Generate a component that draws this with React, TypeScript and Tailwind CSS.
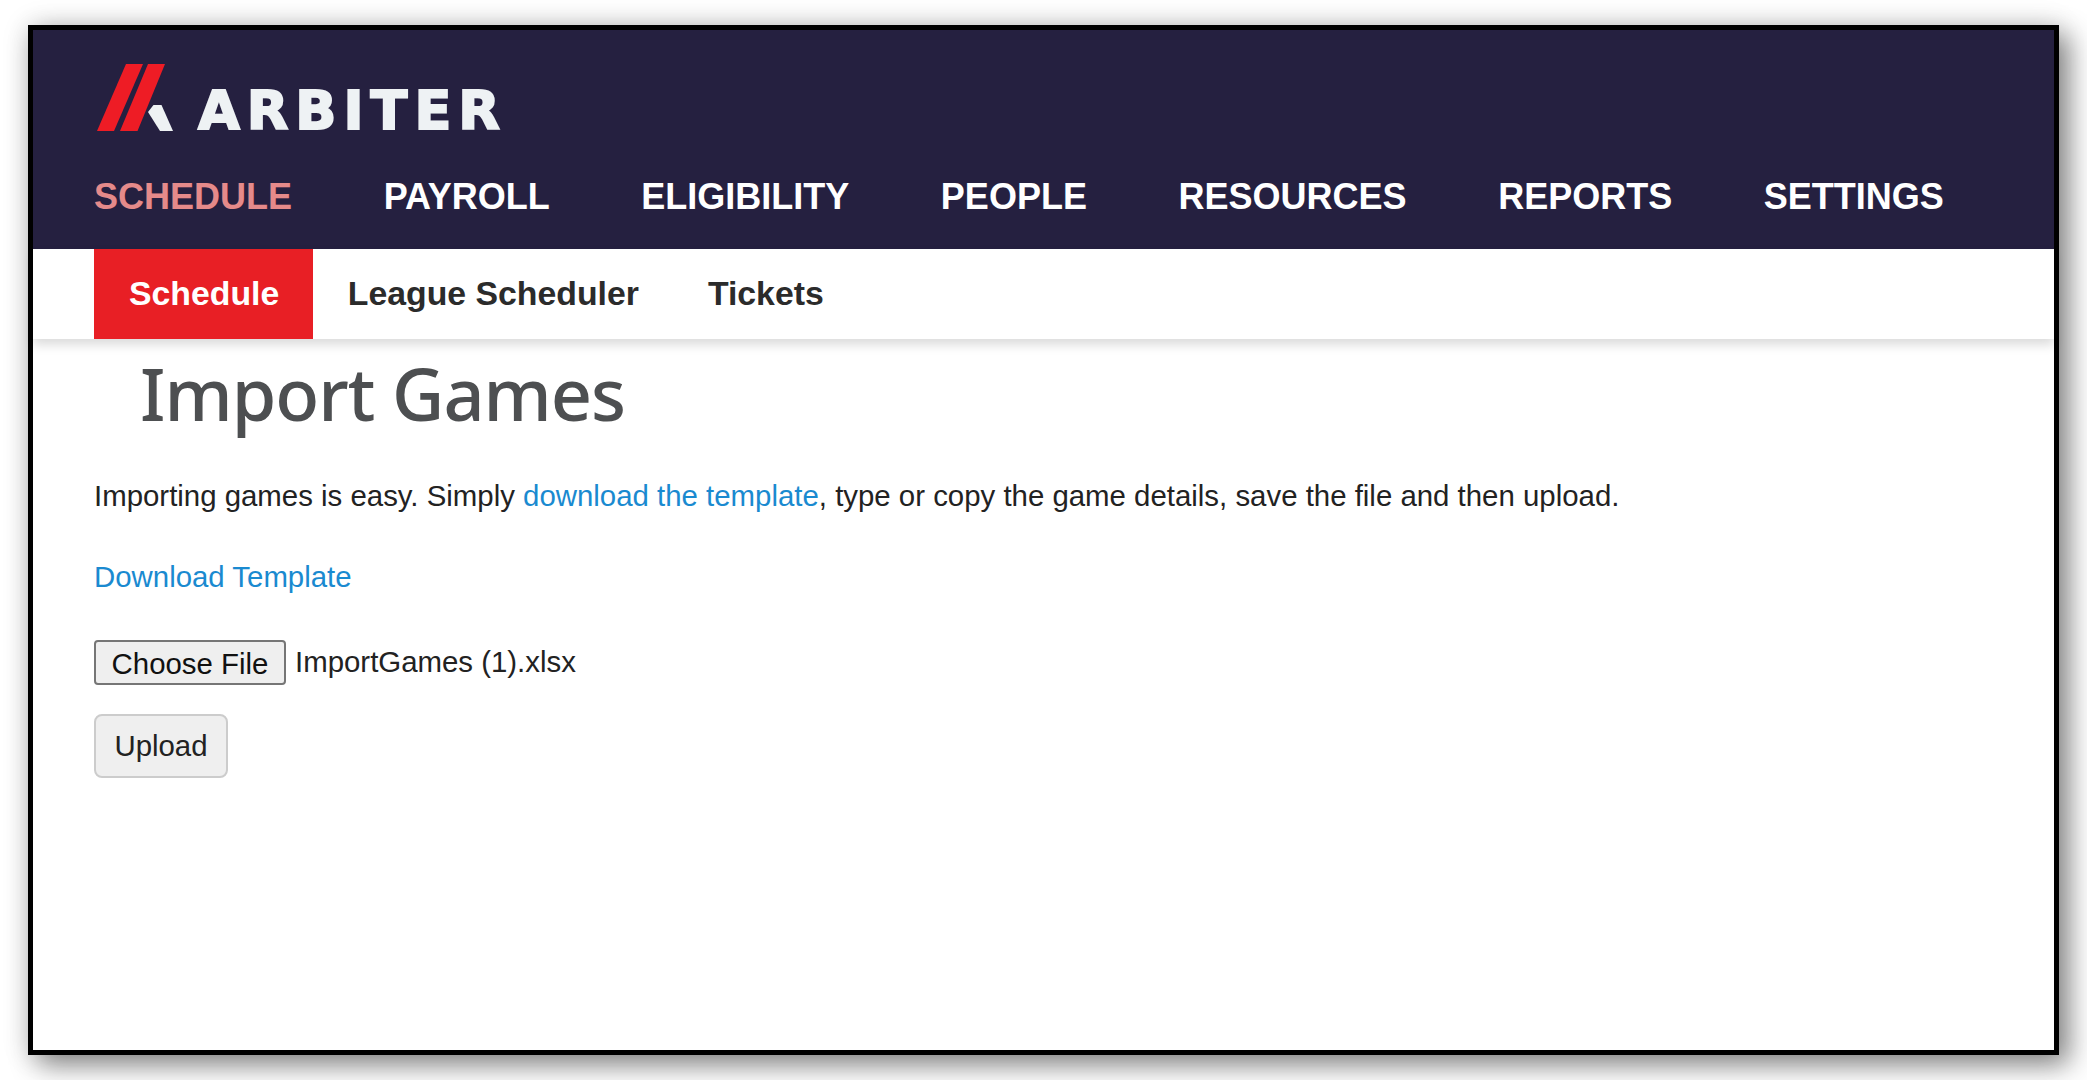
const navItems = ['PAYROLL', 'ELIGIBILITY', 'PEOPLE', 'RESOURCES', 'REPORTS', 'SETTINGS']

function Logo() {
  return (
    <div className="flex items-end h-[67px]">
      <svg width="76" height="67" viewBox="0 0 76 67">
        <polygon points="0,67 17,67 46,0 29,0" fill="#ee1c25" />
        <polygon points="23,67 40.5,67 68,0 51,0" fill="#ee1c25" />
        <polygon points="56.5,41 64.5,41 76,67 63,67 51,48" fill="#eef2f4" />
      </svg>
      <span className="ml-[25px] text-[54px] leading-[40px] h-[40px] font-bold tracking-[7px] text-[#eef2f4] [-webkit-text-stroke:2px_#eef2f4] font-['DejaVu_Sans',sans-serif]">
        ARBITER
      </span>
    </div>
  )
}

export default function App() {
  return (
    <div className="bg-white w-[2087px] h-[1080px] pt-[25px] pl-[28px] overflow-hidden font-['Liberation_Sans',Arial,sans-serif]">
      <div className="w-[2031px] h-[1030px] border-[5px] border-black bg-white shadow-[10px_10px_26px_rgba(0,0,0,0.45),0_0_26px_rgba(0,0,0,0.14)]">
        <header className="bg-[#252040] h-[219px] pt-[34px] pl-[61px]">
          <div className="pl-[3px]">
            <Logo />
          </div>
          <nav className="flex mt-[41px] text-[36px] leading-[50px] font-bold text-white">
            <a className="text-[#e58a8a] mr-[91.6px]">SCHEDULE</a>
            {navItems.map((item) => (
              <a key={item} className="mr-[91.6px]">{item}</a>
            ))}
          </nav>
        </header>

        <div className="relative flex h-[90px] pl-[61px] text-[33.8px] font-bold text-[#2b2b2b] bg-white shadow-[0_6px_10px_rgba(0,0,0,0.14)]">
          <a className="flex items-center pl-[35px] pr-[34px] pb-[2px] bg-[#e81f25] text-white">Schedule</a>
          <a className="flex items-center px-[34.5px] pb-[2px]">League Scheduler</a>
          <a className="flex items-center px-[34.5px] pb-[2px]">Tickets</a>
        </div>

        <main className="pl-[61px]">
          <h1 className="ml-[46px] mt-[9px] text-[72px] leading-[90px] font-medium tracking-[-1px] text-[#4d4f51] font-['Noto_Sans',sans-serif]">
            Import Games
          </h1>
          <p className="mt-[38px] text-[29.4px] leading-[40px] text-[#222222]">
            Importing games is easy. Simply <a className="text-[#1a8ad0]">download the template</a>, type or copy the game details, save the file and then upload.
          </p>
          <p className="mt-[41px] text-[29.4px] leading-[40px] text-[#1a8ad0]">
            <a>Download Template</a>
          </p>
          <div className="flex items-center mt-[43px] text-[29.4px] text-[#222222]">
            <button className="w-[192px] h-[45px] pb-[2px] bg-[#efefef] border-2 border-[#767676] rounded-[4px] text-[#111111]">
              Choose File
            </button>
            <span className="ml-[9px]">ImportGames (1).xlsx</span>
          </div>
          <button className="mt-[29px] w-[134px] h-[64px] bg-[#efefef] border-2 border-[#cccccc] rounded-[8px] text-[29.4px] text-[#222222]">
            Upload
          </button>
        </main>
      </div>
    </div>
  )
}
